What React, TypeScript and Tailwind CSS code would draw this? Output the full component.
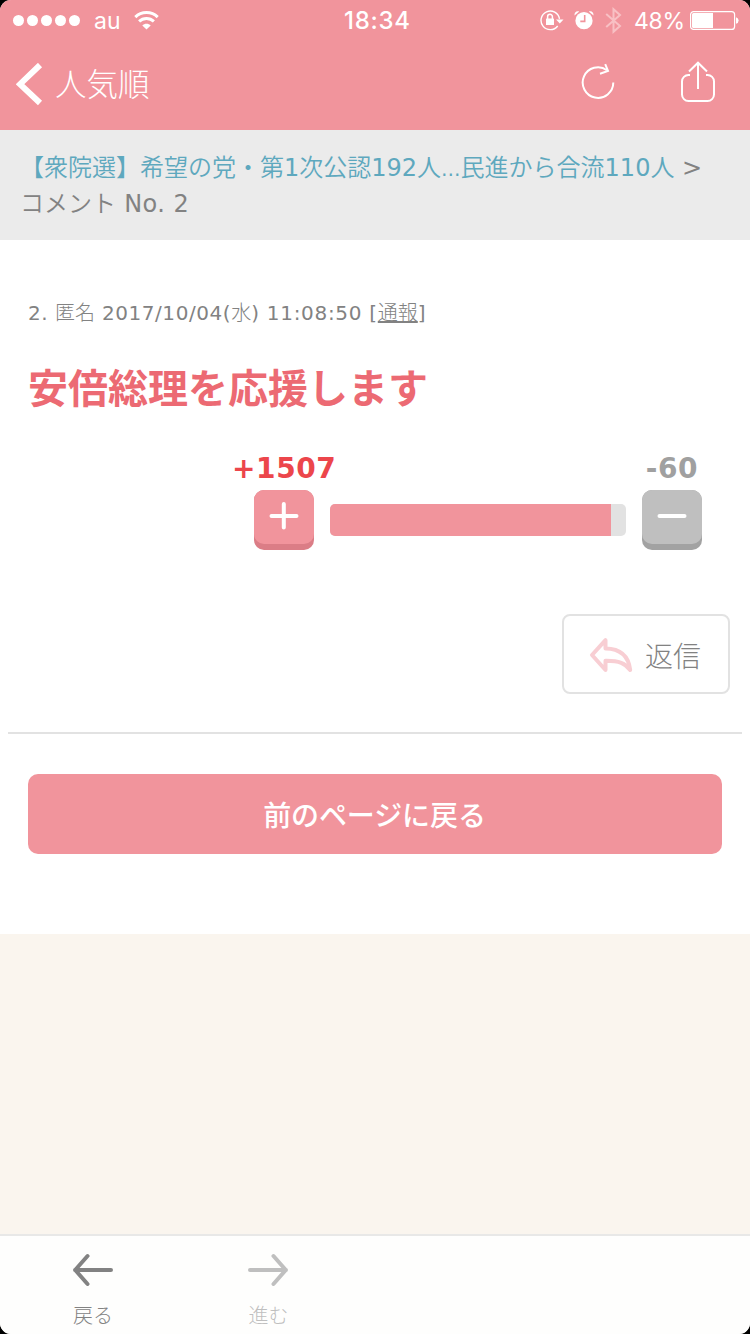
import type { ReactNode } from "react";

const VERDANA = "font-['DejaVu_Sans','Noto_Sans_CJK_JP',sans-serif]";
const GOTHIC = "font-['Noto_Sans_CJK_JP',sans-serif]";

function StatusBar() {
  return (
    <div className="flex h-10 items-center pl-[13px] pr-[11px] text-white font-['Inter',sans-serif]">
      <div className="flex w-[331px] items-center">
        <div className="flex gap-[3px]">
          {[0, 1, 2, 3, 4].map((i) => (
            <span key={i} className="size-[11px] rounded-full bg-white" />
          ))}
        </div>
        <span className="ml-[14px] w-[26px] pt-[2px] text-[23px] leading-10">au</span>
        <svg className="ml-[14px]" width="25" height="19" viewBox="0 0 25 19" fill="none" stroke="white" strokeWidth="3">
          <path d="M1.3 6.1C7.4.1 17.6.1 23.7 6.1" />
          <path d="M5.1 10.3c4.1-3.9 10.7-3.9 14.8 0" />
          <path d="M12.5 18.6 8.3 14.4c2.2-2.2 6.2-2.2 8.4 0z" fill="white" stroke="none" />
        </svg>
      </div>
      <span className="pt-[2px] text-2xl font-medium leading-10 tracking-[0.7px]">18:34</span>
      <div className="ml-auto flex items-center">
        <svg width="24" height="22" viewBox="0 0 24 22" fill="none" stroke="white" strokeWidth="1.4">
          <path d="M17.7 17A9.3 9.3 0 1 1 19.5 9.800" />
          <path d="M16 10.500h7.500l-3.700 4z" fill="white" stroke="none" />
          <rect x="6" y="9.500" width="8" height="6.500" rx=".6" fill="white" stroke="none" />
          <path d="M7.600 10V7.700a2.400 2.400 0 0 1 4.800 0V10" strokeWidth="1.500" />
        </svg>
        <svg className="ml-[10px]" width="20" height="20" viewBox="0 0 20 20">
          <circle cx="10" cy="10.700" r="8.600" fill="white" />
          <path d="M.5 5.500C.2 2.300 2.300.6 5.200 1.400zM19.500 5.500c.3-3.200-1.800-4.900-4.700-4.100z" fill="white" />
          <path d="M10.700 5v6.400H6.300" fill="none" stroke="#f1949c" strokeWidth="1.600" />
        </svg>
        <svg className="ml-[11px]" width="17" height="27" viewBox="0 0 17 27" fill="none" stroke="#f8c0c4" strokeWidth="2">
          <path d="M1.200 7 15 19l-6.500 5.800V2.200L15 8 1.200 20" />
        </svg>
        <span className="ml-[12px] w-[52px] pt-[2px] text-[23px] leading-10 tracking-[-0.3px]">48%</span>
        <svg className="ml-[4px]" width="49" height="19" viewBox="0 0 49 19">
          <rect x=".6" y=".6" width="44" height="17.800" rx="3" fill="none" stroke="white" strokeWidth="1.200" />
          <path d="M2 3.500A1.500 1.500 0 0 1 3.500 2H23v15H3.500A1.500 1.500 0 0 1 2 15.500z" fill="white" />
          <path d="M46 6.200a3.400 3.400 0 0 1 0 6.600z" fill="white" />
        </svg>
      </div>
    </div>
  );
}

function NavBar() {
  return (
    <div className="flex h-[90px] items-start pl-4 text-white">
      <svg className="mt-[23px]" width="28" height="43" viewBox="0 0 28 43" fill="none" stroke="white" strokeWidth="6">
        <path d="M24 2 4 21.200 24 40" />
      </svg>
      <span className={`ml-[11px] mt-[18px] w-[500px] text-[31.500px] font-light leading-[48px] ${GOTHIC}`}>人気順</span>
      <svg className="ml-[26px] mt-[22px]" width="34" height="38" viewBox="0 0 34 38" fill="none" stroke="white" strokeWidth="2">
        <path d="M32.300 20.500a15.300 15.300 0 1 1-6.300-12.300" />
        <path d="M24.200 2.200l2.800 6.700-8 2.900" />
      </svg>
      <svg className="ml-[66px] mt-[21px]" width="34" height="42" viewBox="0 0 34 42" fill="none" stroke="white" strokeWidth="2">
        <path d="M9 14H7.500A6.500 6.500 0 0 0 1 20.500v13A6.500 6.500 0 0 0 7.500 40h19a6.500 6.500 0 0 0 6.500-6.500v-13a6.500 6.500 0 0 0-6.500-6.500H25" />
        <path d="M17 28V2M8 10.500 17 1.700l9 8.800" />
      </svg>
    </div>
  );
}

function VoteButton({ face, edge, children }: { face: string; edge: string; children: ReactNode }) {
  return (
    <button className={`flex h-[60px] w-[60px] items-start rounded-[10px] ${edge}`}>
      <span className={`flex h-[54px] w-full justify-center rounded-[10px] pt-[11px] ${face}`}>
        <svg width="30" height="30" viewBox="0 0 30 30" stroke="white" strokeWidth="4" strokeLinecap="round">
          {children}
        </svg>
      </span>
    </button>
  );
}

export default function App() {
  return (
    <div className="h-[1334px] w-[750px] overflow-hidden bg-black">
      <div className="flex h-full flex-col overflow-hidden rounded-[11px] bg-[#faf5ee] text-[#828282]">
        <header className="h-[130px] bg-[#f1949c]">
          <StatusBar />
          <NavBar />
        </header>
        <nav className={`h-[110px] whitespace-nowrap bg-[#ebebeb] pl-5 pt-5 text-2xl font-[350] leading-9 ${VERDANA}`}>
          <p>
            <a className="text-[#5ea8be]">
              【衆院選】希望の党・第<span className="font-normal">1</span>次公認<span className="font-normal">192</span>人
              <span className="text-[19.500px] font-normal leading-none">…</span>民進から合流<span className="font-normal">110</span>人
            </a>
            <span className="font-normal"> &gt;</span>
          </p>
          <p>
            コメント<span className="font-normal tracking-[0.5px]"> No. 2</span>
          </p>
        </nav>
        <main className="h-[694px] bg-white">
          <p className={`whitespace-nowrap pl-7 pt-[57px] text-[20px] font-light leading-8 ${VERDANA}`}>
            <span className="font-normal tracking-[0.5px]">2. </span>匿名
            <span className="font-normal tracking-[0.57px]"> 2017/10/04(</span>水
            <span className="font-normal tracking-[0.7px]">) 11:08:50 [</span>
            <a className="underline">通報</a>
            <span className="font-normal">]</span>
          </p>
          <h1 className={`pl-7 pt-[27px] text-[40px] font-bold leading-[60px] text-[#ec6a73] ${GOTHIC}`}>安倍総理を応援します</h1>
          <section className="mt-[34px] flex h-[100px] pl-[234px]">
            <div className="w-[96px]">
              <p className={`-ml-[2px] h-10 whitespace-nowrap pt-px text-[28px] font-bold leading-9 tracking-[0.6px] text-[#ec464b] ${VERDANA}`}>
                +1507
              </p>
              <div className="pl-5">
                <VoteButton face="bg-[#f1949c]" edge="bg-[#db7d86]">
                  <path d="M2.500 15h25M14.800 3v23.500" />
                </VoteButton>
              </div>
            </div>
            <div className="mt-[54px] flex h-8 w-[296px] overflow-hidden rounded-[5px] bg-[#e2e2e2]">
              <div className="w-[281px] bg-[#f1949c]" />
            </div>
            <div className="ml-4 w-[60px]">
              <p className={`h-10 whitespace-nowrap pt-px text-center text-[28px] font-bold leading-9 tracking-[0.6px] text-[#a0a0a0] ${VERDANA}`}>
                -60
              </p>
              <VoteButton face="bg-[#bfbfbf]" edge="bg-[#a2a2a2]">
                <path d="M2.500 15h25" />
              </VoteButton>
            </div>
          </section>
          <div className="flex h-[144px] justify-end pr-5 pt-16">
            <button className="flex h-20 w-[168px] items-start rounded-lg border-2 border-[#e2e2e2] bg-white pl-[25px]">
              <svg className="mt-[21px]" width="45" height="36" viewBox="0 0 45 36" fill="none" stroke="#f8ced3" strokeWidth="4" strokeLinejoin="round">
                <path d="M3 18 16.500 3.200v8.300C31 11.700 39.500 18.500 41.200 33 36.500 26.300 30 23.500 16.500 23.700v9.300z" />
              </svg>
              <span className={`ml-[11px] mt-[18px] whitespace-nowrap text-[28px] font-light leading-[42px] ${GOTHIC}`}>返信</span>
            </button>
          </div>
          <div className="mx-2 mt-[38px] h-[2px] bg-[#e2e2e2]" />
          <div className="px-7 pt-10">
            <button className={`h-20 w-full rounded-[10px] bg-[#f1949c] pr-px text-[28px] font-medium tracking-[-0.1px] text-white ${GOTHIC}`}>
              前のページに戻る
            </button>
          </div>
        </main>
        <footer className={`mt-auto flex h-[100px] border-t-2 border-[#e8e8e7] bg-[#fefefd] pl-[5px] text-[20px] font-light ${GOTHIC}`}>
          <div className="flex w-[175px] flex-col items-center pt-[17px]">
            <svg width="42" height="34" viewBox="0 0 42 34" fill="none" stroke="currentColor" strokeWidth="4" strokeLinecap="round" strokeLinejoin="round">
              <path d="M39 17H3M15.500 3 3.200 17l12.300 14" />
            </svg>
            <span className="ml-px mt-[13px] leading-[30px]">戻る</span>
          </div>
          <div className="flex w-[175px] flex-col items-center pt-[17px] text-[#bfbfbf]">
            <svg width="42" height="34" viewBox="0 0 42 34" fill="none" stroke="currentColor" strokeWidth="4" strokeLinecap="round" strokeLinejoin="round">
              <path d="M3 17h36M26.500 3l12.300 14-12.300 14" />
            </svg>
            <span className="ml-[2px] mt-[13px] leading-[30px]">進む</span>
          </div>
        </footer>
      </div>
    </div>
  );
}
